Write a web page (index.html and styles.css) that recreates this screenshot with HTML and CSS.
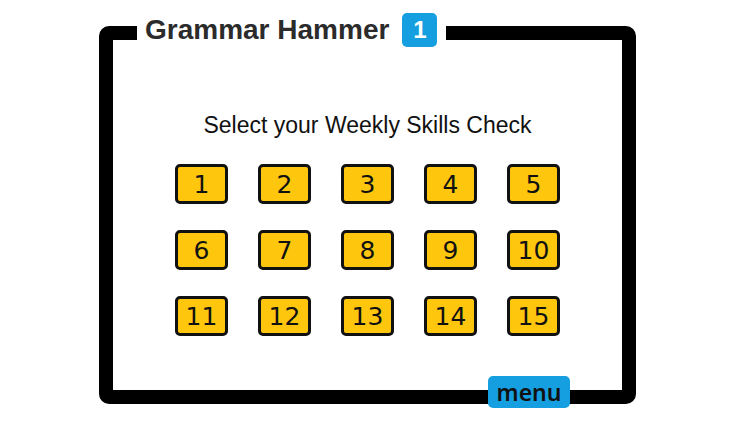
FILE: index.html
```html
<!DOCTYPE html>
<html lang="en">
<head>
  <meta charset="UTF-8">
  <title>Grammar Hammer 1</title>
  <meta name="viewport" content="width=device-width, initial-scale=1.0">
  <link rel="stylesheet" href="styles.css">
</head>
<body>
  <!-- Main board with the title sitting on the top border -->
  <div class="board">
    <div class="board-title">
      <span class="title-text">Grammar Hammer</span>
      <span class="level-badge">1</span>
    </div>

    <h1 class="prompt">Select your Weekly Skills Check</h1>

    <div class="check-grid">
      <button class="check-btn">1</button>
      <button class="check-btn">2</button>
      <button class="check-btn">3</button>
      <button class="check-btn">4</button>
      <button class="check-btn">5</button>
      <button class="check-btn">6</button>
      <button class="check-btn">7</button>
      <button class="check-btn">8</button>
      <button class="check-btn">9</button>
      <button class="check-btn">10</button>
      <button class="check-btn">11</button>
      <button class="check-btn">12</button>
      <button class="check-btn">13</button>
      <button class="check-btn">14</button>
      <button class="check-btn">15</button>
    </div>

    <!-- Menu button sits on the bottom border -->
    <button class="menu-btn">menu</button>
  </div>
</body>
</html>
```
FILE: styles.css
```css
html, body { margin: 0; padding: 0; background: #fff; }
body {
  width: 750px; height: 422px; overflow: hidden;
  padding: 26px 0 0 99px; box-sizing: border-box;
  font-family: "Liberation Sans", Arial, sans-serif;
}
/* Board frame */
.board {
  position: relative;
  width: 537px; height: 378px;
  box-sizing: border-box;
  border: 14px solid #000;
  border-radius: 10px;
  padding-top: 72px;
}
.board-title {
  position: absolute; top: -27px; left: 24px;
  height: 34px;
  display: flex; align-items: center; gap: 13px;
  padding: 0 9px 0 8px;
  background: #fff;
}
.title-text {
  font-size: 28px; font-weight: bold; line-height: 32px;
  color: #2b2b2b;
}
.level-badge {
  width: 35px; height: 34px;
  display: flex; align-items: center; justify-content: center;
  background: #159fe0; color: #fff;
  border-radius: 5px;
  font-size: 24px; font-weight: bold;
}
/* Prompt + skill check buttons */
.prompt {
  margin: 0;
  text-align: center;
  font-size: 23px; font-weight: normal; line-height: 26px;
  color: #111;
}
.check-grid {
  display: grid;
  grid-template-columns: repeat(5, 53px);
  grid-auto-rows: 40px;
  column-gap: 30px; row-gap: 26px;
  justify-content: center;
  margin-top: 26px;
}
.check-btn {
  box-sizing: border-box;
  margin: 0; padding: 0;
  background: #fec70e;
  border: 3px solid #111;
  border-radius: 5px;
  font-family: "Comic Sans MS", "DejaVu Sans", sans-serif;
  font-size: 25px; color: #111;
  cursor: pointer;
}
.check-btn:hover { background: #ffd84a; }
.menu-btn {
  position: absolute; right: 52px; bottom: -18px;
  width: 82px; height: 32px;
  margin: 0; padding: 0;
  background: #159fe0;
  border: none; border-radius: 5px;
  font-family: "Noto Sans", "Liberation Sans", sans-serif;
  font-size: 23px; font-weight: 600; line-height: 30px;
  color: #111;
  cursor: pointer;
}
```
